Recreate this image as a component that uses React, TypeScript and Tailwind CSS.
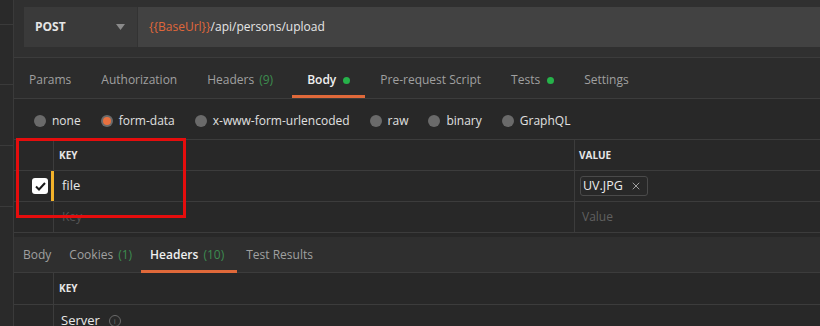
import { X } from "lucide-react";

const font = { fontFamily: '"Open Sans", "Liberation Sans", sans-serif' };

//* Request tabs
const reqTabs = [
  { label: "Params" },
  { label: "Authorization" },
  { label: "Headers", count: "(9)" },
  { label: "Body", dot: true, active: true },
  { label: "Pre-request Script" },
  { label: "Tests", dot: true },
  { label: "Settings" }
];

const bodyModes = ["none", "form-data", "x-www-form-urlencoded", "raw", "binary", "GraphQL"];

const resTabs = [
  { label: "Body" },
  { label: "Cookies", count: "(1)" },
  { label: "Headers", count: "(10)", active: true },
  { label: "Test Results" }
];

export default function App() {
  return (
    <div className="w-[820px] h-[326px] overflow-hidden flex bg-[#282828] text-[12px] text-[#a8a8a8]" style={font}>
      {/* left gutter */}
      <div className="w-[14px] shrink-0 border-r border-[#3a3a3a] bg-[#2a2a2a] flex flex-col">
        <div className="h-[25px] shrink-0 border-b border-[#3a3a3a]" />
        <div className="h-[60px] shrink-0 border-b border-[#3a3a3a]" />
        <div className="h-[61px] shrink-0 border-b border-[#3a3a3a]" />
        <div className="h-[61px] shrink-0 border-b border-[#3a3a3a]" />
      </div>

      <div className="flex-1 flex flex-col min-w-0">
        {/* request bar */}
        <div className="h-[58px] shrink-0 bg-[#303030] border-b border-[#3c3c3c] pl-[10px] pt-[7px]">
          <div className="flex h-[40px]">
            <div className="w-[114px] bg-[#3a3a3a] border-r border-[#333] flex items-center justify-between pl-[11px] pr-[12px]">
              <span className="font-bold text-[#e6e6e6]">POST</span>
              <svg width="9" height="6" viewBox="0 0 9 6"><path d="M0 0h9L4.5 6z" fill="#8a8a8a" /></svg>
            </div>
            <div className="flex-1 bg-[#424242] flex items-center pl-[11px]">
              <span className="text-[#e0673a]">{"{{BaseUrl}}"}</span>
              <span className="text-[#e6e6e6]">/api/persons/upload</span>
            </div>
          </div>
        </div>

        {/* request tabs */}
        <div className="h-[41px] shrink-0 bg-[#2c2c2c] border-b border-[#3c3c3c] flex">
          {reqTabs.map(t => (
            <div key={t.label} className={`relative pl-[15px] pt-[4px] flex items-center gap-[7px] ${t.count ? "pr-[19px]" : "pr-[15px]"} ${t.active ? "text-[#f0f0f0] font-semibold" : "text-[#a0a0a0]"}`}>
              <span className="flex">
                {t.label}
                {t.count && <span className="ml-[5px] text-[#3d8c4f]">{t.count}</span>}
              </span>
              {t.dot && <span className="w-[7px] h-[7px] rounded-full bg-[#26b24a]" />}
              {t.active && <div className="absolute left-0 right-0 bottom-0 h-[3px] bg-[#e0693a]" />}
            </div>
          ))}
        </div>

        {/* body modes */}
        <div className="h-[40px] shrink-0 flex items-center pl-[20px] pt-[4px] gap-[20px]">
          {bodyModes.map(m => (
            <div key={m} className="flex items-center gap-[6px] text-[#e0e0e0]">
              <span className="w-[12px] h-[12px] rounded-full bg-[#6a6a6a] flex items-center justify-center">
                {m === "form-data" && <span className="w-[8px] h-[8px] rounded-full bg-[#e8703f]" />}
              </span>
              <span>{m}</span>
            </div>
          ))}
        </div>

        {/* form-data table */}
        <div className="relative shrink-0 border-t border-[#3c3c3c]">
          <div className="grid grid-cols-[40px_521px_1fr] h-[31px] border-b border-[#3c3c3c]">
            <div className="border-r border-[#3c3c3c]" />
            <div className="border-r border-[#3c3c3c] flex items-center pl-[5px] text-[10px] font-bold text-[#e6e6e6]">KEY</div>
            <div className="flex items-center pl-[4px] text-[10px] font-bold text-[#e6e6e6]">VALUE</div>
          </div>
          <div className="grid grid-cols-[40px_521px_1fr] h-[31px] border-b border-[#3c3c3c]">
            <div className="flex items-center justify-end">
              <span className="w-[16px] h-[16px] rounded-[3px] bg-white flex items-center justify-center mr-[3px]">
                <svg width="11" height="9" viewBox="0 0 11 9"><path d="M1 4.5l3 3L10 1" stroke="#1a1a1a" strokeWidth="2" fill="none" /></svg>
              </span>
              <span className="w-[3px] h-full bg-[#f2b22a]" />
            </div>
            <div className="border-r border-[#3c3c3c] flex items-center pl-[8px] text-[#e8e8e8] text-[13px]">file</div>
            <div className="flex items-center pl-[5px]">
              <div className="h-[20px] flex items-center gap-[7px] border border-[#4a4a4a] rounded-[3px] pl-[2px] pr-[5px] text-[#ececec] text-[12.5px]">
                <span>UV.JPG</span>
                <X size={12} strokeWidth={2} className="text-[#a0a0a0]" />
              </div>
            </div>
          </div>
          <div className="grid grid-cols-[40px_521px_1fr] h-[31px] border-b border-[#3c3c3c]">
            <div className="border-r border-[#3c3c3c]" />
            <div className="border-r border-[#3c3c3c] flex items-center pl-[8px] text-[#555]">Key</div>
            <div className="flex items-center pl-[7px] text-[#606060]">Value</div>
          </div>
          {/* highlight box */}
          <div className="absolute left-[2px] top-[-2px] w-[170px] h-[80px] border-[3px] border-[#e50d0d]" />
        </div>

        {/* response tabs */}
        <div className="h-[36px] shrink-0 mt-[4px] bg-[#2f2f2f] border-b border-[#3c3c3c] flex">
          {resTabs.map(t => (
            <div key={t.label} className={`relative px-[9px] flex items-center ${t.active ? "text-[#f0f0f0] font-semibold pr-[13px]" : "text-[#a0a0a0]"}`}>
              <span className="flex">
                {t.label}
                {t.count && <span className="ml-[5px] text-[#3d8c4f] font-normal">{t.count}</span>}
              </span>
              {t.active && <div className="absolute left-0 right-0 bottom-[-1px] h-[3px] bg-[#e0693a]" />}
            </div>
          ))}
        </div>

        {/* response headers table */}
        <div className="grid shrink-0 grid-cols-[40px_1fr] h-[32px] border-b border-[#3c3c3c]">
          <div className="border-r border-[#3c3c3c]" />
          <div className="flex items-center pl-[5px] text-[10px] font-bold text-[#e6e6e6]">KEY</div>
        </div>
        <div className="grid shrink-0 grid-cols-[40px_1fr] h-[31px]">
          <div className="border-r border-[#3c3c3c]" />
          <div className="flex items-center pl-[7px] gap-[9px] text-[#e8e8e8] text-[13px]">
            <span>Server</span>
            <span className="w-[12px] h-[12px] rounded-full border border-[#6a6a6a] text-[8px] text-[#6a6a6a] flex items-center justify-center leading-none">i</span>
          </div>
        </div>
      </div>
    </div>
  );
}
